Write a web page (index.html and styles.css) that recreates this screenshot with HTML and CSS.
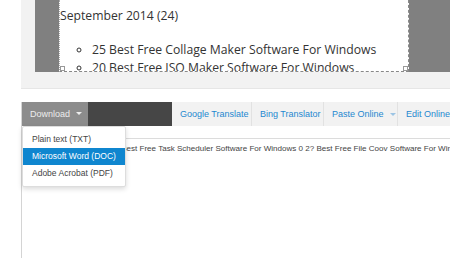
FILE: index.html
```html
<!DOCTYPE html>
<html lang="en">
<head>
    <meta charset="UTF-8">
    <title>Webpage to document</title>
    <link rel="stylesheet" href="styles.css">
</head>
<body>

    <div class="preview">
        <div class="frame">
            <div class="doc">
                <p class="month">September 2014 (24)</p>
                <ul class="posts">
                    <li>25 Best Free Collage Maker Software For Windows</li>
                    <li>20 Best Free ISO Maker Software For Windows</li>
                </ul>
                <span class="handle left"></span>
                <span class="handle right"></span>
            </div>
        </div>
    </div>

    <div class="editor">
        <div class="toolbar">
            <div class="download">
                <button class="dl-btn">Download <span class="caret"></span></button>
                <ul class="menu">
                    <li>Plain text (TXT)</li>
                    <li class="active">Microsoft Word (DOC)</li>
                    <li>Adobe Acrobat (PDF)</li>
                </ul>
            </div>
            <div class="dark"></div>
            <a class="tab t-google">Google Translate</a>
            <a class="tab t-bing">Bing Translator</a>
            <a class="tab t-paste">Paste Online <span class="caret blue"></span></a>
            <a class="tab t-edit">Edit Online</a>
        </div>
        <div class="gap"></div>
        <div class="textarea">
            <p>2? Best Free Task Scheduler Software For Windows 0 2? Best Free File Coov Software For Windows</p>
        </div>
    </div>

</body>
</html>
```

FILE: styles.css
```css
/* page */
body {
    margin: 0;
    background: #fff;
    font-family: "Liberation Sans", Arial, sans-serif;
    width: 450px;
    height: 258px;
    overflow: hidden;
}

/* preview of the page */
.preview {
    margin-left: 21px;
    height: 88px;
    background: #f2f2f2;
    border-bottom: 1px solid #e6e6e6;
    padding-left: 14px;
}

.frame {
    height: 72px;
    background: #808080;
    padding-left: 24px;
}

.doc {
    position: relative;
    width: 348px;
    height: 71px;
    background: #fff;
    border-right: 1px dashed #888;
    border-bottom: 1px dashed #888;
    border-left: 1px dotted #aaa;
    overflow: hidden;
    font-family: "Open Sans", "Noto Sans", sans-serif;
    font-size: 12.2px;
    color: #333;
}

.month {
    margin: 0;
    padding-top: 7px;
    line-height: 18px;
}

.posts {
    margin: 16px 0 0;
    padding-left: 32px;
    list-style: circle;
    line-height: 17.5px;
}

.handle {
    position: absolute;
    bottom: 0;
    width: 3px;
    height: 3px;
    border: 1px solid #999;
    background: #fff;
}

.handle.left { left: 0; }
.handle.right { right: 0; }

/* editor */
.editor {
    margin: 13px 0 0 21px;
    border-left: 1px solid #d4d4d4;
}

.toolbar {
    display: flex;
    height: 24px;
    background: #f2f2f2;
    font-size: 9px;
}

.toolbar > * {
    flex-shrink: 0;
}

.download {
    position: relative;
}

.dl-btn {
    height: 24px;
    width: 66px;
    border: 0;
    padding: 0 0 0 8px;
    text-align: left;
    background: #8c8c8c;
    color: #ececec;
    font-family: "Liberation Sans", Arial, sans-serif;
    font-size: 9px;
}

.caret {
    display: inline-block;
    margin-left: 3px;
    vertical-align: 2px;
    border-left: 3px solid transparent;
    border-right: 3px solid transparent;
    border-top: 3px solid #eee;
}

.caret.blue {
    margin-left: 6px;
    border-top-color: #9cc4e4;
}

.dark {
    width: 84px;
    background: #464646;
}

.tab {
    display: flex;
    align-items: center;
    box-sizing: border-box;
    padding: 0 8px;
    color: #1f88d0;
    border-right: 1px solid #e2e2e2;
    white-space: nowrap;
}

.t-google { width: 80px; }
.t-bing { width: 72px; }
.t-paste { width: 74px; }
.t-edit { border-right: 0; }

/* dropdown menu */
.menu {
    position: absolute;
    top: 24px;
    left: 0;
    z-index: 2;
    width: 104px;
    box-sizing: border-box;
    margin: 0;
    padding: 4px 0;
    list-style: none;
    background: #fff;
    border: 1px solid #ddd;
    border-radius: 2px;
    box-shadow: 0 2px 5px rgba(0, 0, 0, 0.15);
    font-size: 8.5px;
    color: #444;
}

.menu li {
    height: 17px;
    line-height: 17px;
    padding-left: 9px;
    white-space: nowrap;
}

.menu li.active {
    background: #0f86cf;
    color: #fff;
}

.gap {
    height: 12px;
}

.textarea {
    height: 120px;
    border-top: 1px solid #dcdcdc;
    overflow: hidden;
}

.textarea p {
    margin: 5px 0 0 88px;
    font-size: 8.05px;
    color: #444;
    white-space: nowrap;
}
```
